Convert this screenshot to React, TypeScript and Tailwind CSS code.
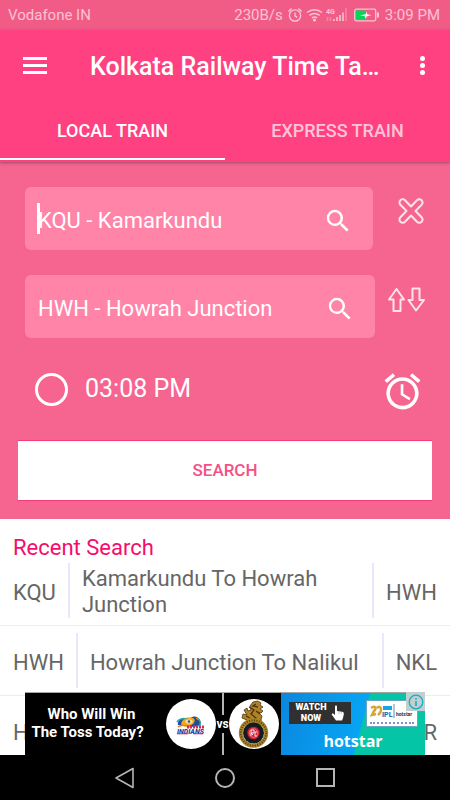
import { type FC, useState } from 'react';
import { MdAlarm, MdSearch } from 'react-icons/md';

interface RecentSearch {
  from: string;
  to: string;
  label: string;
}

const RECENT: RecentSearch[] = [
  { from: 'KQU', to: 'HWH', label: 'Kamarkundu To Howrah Junction' },
  { from: 'HWH', to: 'NKL', label: 'Howrah Junction To Nalikul' },
  { from: 'H', to: 'R', label: '' },
];

const StatusIcons: FC = () => (
  <svg viewBox="0 0 94 20" className="h-5 w-[94px] shrink-0" fill="none" stroke="#fbc3d3" aria-hidden="true">
    {/* alarm */}
    <g strokeWidth="1.4">
      <circle cx="8" cy="10.5" r="5.6" />
      <path d="M8 7.500v3.300l2.200 1.600M1.400 6.600 4.600 3.600M14.600 6.600 11.400 3.600" />
    </g>
    {/* wifi */}
    <g strokeWidth="1.5">
      <path d="M20 7.5q7.500-5.500 15 0M22.400 10.400q5.100-3.800 10.200 0M24.800 13q2.700-1.800 5.400 0" />
      <circle cx="27.500" cy="15" r=".8" fill="#fbc3d3" />
    </g>
    {/* signal */}
    <text x="39" y="8.500" fontSize="7" fontWeight="700" fill="#fbc3d3" stroke="none" fontFamily="Roboto, sans-serif">4G</text>
    <g strokeWidth="1.600">
      <path d="M40.500 16v-4M43.500 16v-4" opacity=".4" />
      <path d="M47 16v-2M50 16v-4M53 16v-6M56 16V7.500" />
      <path d="M59 16V3" opacity=".4" />
    </g>
    {/* battery */}
    <rect x="67.700" y="4.200" width="21" height="11.600" rx="1.500" strokeWidth="1.300" />
    <rect x="69" y="5.500" width="9.500" height="9" fill="#04d65a" stroke="none" />
    <path d="M91 7.500v5" strokeWidth="2" />
    <path d="m73 10.500 6-1.500.500-2.500 1 3 4 .500-5 1.500-.500 2.500-1.500-3z" fill="#fff" stroke="none" />
  </svg>
);

const ClearIcon: FC = () => (
  <svg viewBox="0 0 28 28" className="size-7" fill="none" stroke="#ffe3eb" strokeWidth="2" strokeLinejoin="round" aria-hidden="true">
    <path d="M14 9.500 20 3.200a3 3 0 0 1 4.600 4.600L18.500 14l6.100 6.200a3 3 0 0 1-4.600 4.600L14 18.500 8 24.800a3 3 0 0 1-4.600-4.600L9.500 14 3.400 7.800A3 3 0 0 1 8 3.200z" />
  </svg>
);

const SwapIcon: FC = () => (
  <svg viewBox="0 0 38 28" className="h-7 w-[38px]" fill="none" stroke="#ffe3eb" strokeWidth="2" strokeLinejoin="round" aria-hidden="true">
    <path d="M9.500 4 17 14.500h-3.500V26h-7V14.500H2z" />
    <path d="M25.500 3.500h7V15H37l-8 10.500L21.500 15h4z" />
  </svg>
);

const IndiansLogo: FC = () => (
  <svg viewBox="0 0 50 50" className="size-[50px] shrink-0" aria-hidden="true">
    <circle cx="25" cy="25" r="25" fill="#fff" />
    <path d="M12 26c-1-5 5-8 12-7 6-4 11 0 10 7l-6 2z" fill="#1b4f9c" />
    <path d="M11 23c2-3 6-4 9-3M31 19c4 2 4 6 2 9" fill="none" stroke="#24a6a0" strokeWidth="1.500" />
    <ellipse cx="22" cy="23" rx="7" ry="4" transform="rotate(-18 22 23)" fill="#f5a91d" />
    <ellipse cx="23" cy="22.500" rx="3.500" ry="2" fill="#fbe39a" />
    <circle cx="23" cy="22.500" r="1.200" fill="#1b4f9c" />
    <path d="M12 28c4-3 8-2 12 0M30 19l3 2" fill="none" stroke="#e87b25" strokeWidth="1.500" />
    <path d="M21 28h18" stroke="#d52b55" strokeWidth="3" strokeDasharray="2 1" />
    <text x="11" y="35" fontSize="7" fontWeight="900" fontStyle="italic" fill="#23439b" fontFamily="Roboto, sans-serif">INDIANS</text>
    <path d="M11 34.800h11M27 34.800h10" stroke="#cf2963" strokeWidth="1" />
  </svg>
);

const ChallengersLogo: FC = () => (
  <svg viewBox="0 0 50 50" className="size-[50px] shrink-0" aria-hidden="true">
    <circle cx="25" cy="25" r="25" fill="#fff" />
    <path
      d="m17 25 1-4-5-2 1-4 4 1-3-5 3-2 1 3 3-1-1-4 3-4 5-1 3 2-1 2 3 2-3 2 3 2-2 2-3-1 4 4-1 4 2 5z"
      fill="#b18128"
      stroke="#49350f"
      strokeWidth=".8"
    />
    <path d="m20 8 5 3-3 4 5 4-4 4M27 5l-3 2 5 1M27 12l4 3M17 17l4 2" fill="none" stroke="#49350f" strokeWidth="1.300" />
    <circle cx="24.500" cy="34" r="12.700" fill="none" stroke="#a7842b" strokeWidth="4" />
    <circle cx="24.500" cy="34" r="12.700" fill="none" stroke="#54400f" strokeWidth="2" strokeDasharray="1 1.500" />
    <circle cx="24.500" cy="34" r="10.500" fill="#171a20" />
    <circle cx="24.500" cy="34" r="6.200" fill="#d51c34" />
    <circle cx="24.500" cy="34" r="4.300" fill="none" stroke="#f4b5a8" strokeWidth=".6" />
    <path d="M22 37v-6h3v3h-3l2 2M28 33h-2v4h2" fill="none" stroke="#fff" strokeWidth=".9" />
  </svg>
);

const HandIcon: FC = () => (
  <svg viewBox="0 0 14 16" className="h-4 w-3.5 shrink-0" aria-hidden="true">
    <path d="M4 1.500c0-1.500 2-1.500 2 0V6l5 .800c1.500.200 2 1 1.800 2.500L12 13l-1 2.500H5L1 10c-.8-1.200.7-2 1.600-1.200L4 10z" fill="#fff" />
    <path d="M8 6.500v2.500M10.300 7v2" stroke="#8a8a8a" strokeWidth=".5" />
  </svg>
);

const AdBanner: FC = () => (
  <div className="absolute inset-x-[25px] bottom-0 h-[63px]">
    <a href="#hotstar" className="flex h-full border-t border-[#a5a5a5] bg-black text-white">
      <span className="flex flex-1 flex-col justify-center pr-4 pb-0.5 text-center text-[15px]/[18px] font-bold whitespace-nowrap">
        <span className="pl-2">Who Will Win</span>
        <span>The Toss Today?</span>
      </span>
      <span className="flex items-center">
        <IndiansLogo />
        <span className="flex h-full w-[13px] flex-col items-center">
          <span className="w-0.5 flex-1 bg-[#b5b5b5]" />
          <span className="text-xs/[18px] font-bold">vs</span>
          <span className="w-0.5 flex-1 bg-[#b5b5b5]" />
        </span>
        <ChallengersLogo />
      </span>
      <span className="ml-0.5 flex w-36 flex-col items-center bg-linear-105 from-[#0b87df] via-[#08a4f3] via-55% to-[#04c5a5] to-56% pt-[7px]">
        <span className="flex w-full items-start justify-between pr-[7px] pl-2">
          <span className="mt-0.5 flex h-[22px] w-[62px] items-center justify-center gap-1 bg-[#303030]">
            <span className="flex flex-col text-center text-[9px]/[11px] font-black">
              <span>WATCH</span>
              <span>NOW</span>
            </span>
            <HandIcon />
          </span>
          <span className="flex h-[27px] w-[52px] flex-col items-center justify-between border border-[#68a6c1] bg-white py-0.5">
            <svg viewBox="0 0 48 16" className="h-4 w-12" aria-hidden="true">
              <path d="M3 5c4-3 6 0 3 3l-2 4 4-1M9 5c4-4 6 3 1 7" fill="none" stroke="#d6a62d" strokeWidth="2.500" />
              <path d="M15 3h9v4h-9z" fill="#18a6df" />
              <text x="14" y="14" fontSize="7" fontWeight="900" fill="#1776b8" fontFamily="Roboto, sans-serif">IPL</text>
              <path d="M26 1v14" stroke="#3f6e9c" strokeWidth=".8" />
              <text x="28" y="13" fontSize="5" fontWeight="700" fill="#233247" fontFamily="Roboto, sans-serif">hotstar</text>
            </svg>
            <span className="w-11 border-t-2 border-dotted border-[#8195c4]" />
          </span>
        </span>
        <span className="mt-1 font-['Open_Sans',sans-serif] text-base/[20px] font-bold">hotstar</span>
      </span>
    </a>
    <button type="button" aria-label="Ad information" className="absolute top-0 right-0 flex size-[19px] items-center justify-center bg-[#c3cfcf]">
      <svg viewBox="0 0 16 16" className="size-4" fill="none" stroke="#10aeca" aria-hidden="true">
        <circle cx="8" cy="8" r="6.800" strokeWidth="1.300" />
        <path d="M8 7v5M8 4v1.600" strokeWidth="1.600" />
      </svg>
    </button>
  </div>
);

const App: FC = () => {
  const [tab, setTab] = useState<'local' | 'express'>('local');
  const [from, setFrom] = useState('KQU - Kamarkundu');
  const [to, setTo] = useState('HWH - Howrah Junction');

  const swap = () => {
    setFrom(to);
    setTo(from);
  };

  return (
    <div className="flex h-screen flex-col overflow-hidden bg-white font-[Roboto,sans-serif]">
      <div className="flex h-[30px] shrink-0 items-center justify-between bg-[#f15c87] pr-2.5 pl-2 text-[15px] text-[#fbc3d3]">
        <span>Vodafone IN</span>
        <span className="flex items-center gap-1">
          230B/s
          <StatusIcons />
          3:09 PM
        </span>
      </div>

      <header className="relative z-10 shrink-0 bg-[#ff4081] text-white shadow-[0_1px_3px_rgba(90,60,70,0.6)]">
        <div className="flex h-[72px] items-center pr-4 pb-0.5 pl-[23px]">
          <button type="button" aria-label="Open menu" className="flex w-6 flex-col gap-1">
            <span className="h-[3px] bg-white" />
            <span className="h-[3px] bg-white" />
            <span className="h-[3px] bg-white" />
          </button>
          <h1 className="ml-[43px] flex-1 truncate pt-1 text-[25px] font-medium">Kolkata Railway Time Ta…</h1>
          <button type="button" aria-label="More options" className="flex w-6 flex-col items-center gap-0.5">
            <span className="size-[5px] rounded-full bg-white" />
            <span className="size-[5px] rounded-full bg-white" />
            <span className="size-[5px] rounded-full bg-white" />
          </button>
        </div>
        <div role="tablist" className="flex pb-0.5 text-lg font-medium">
          <button
            type="button"
            role="tab"
            aria-selected={tab === 'local'}
            onClick={() => setTab('local')}
            className={`h-[58px] flex-1 border-b-2 pt-0.5 ${tab === 'local' ? 'border-white' : 'border-transparent text-white/70'}`}
          >
            LOCAL TRAIN
          </button>
          <button
            type="button"
            role="tab"
            aria-selected={tab === 'express'}
            onClick={() => setTab('express')}
            className={`h-[58px] flex-1 border-b-2 pt-0.5 ${tab === 'express' ? 'border-white' : 'border-transparent text-white/70'}`}
          >
            EXPRESS TRAIN
          </button>
        </div>
      </header>

      <form
        onSubmit={(event) => event.preventDefault()}
        className="shrink-0 bg-[#f6658f] px-[18px] pt-[25px] pb-[18px] text-white"
      >
        <div className="flex items-start pl-[7px]">
          <div className="relative flex h-[63px] flex-1 items-center rounded-md bg-[#ff84a8] pt-1 pr-5 pl-[13px]">
            <span className="absolute top-4 left-3 h-[31px] w-[3px] bg-white" />
            <input
              aria-label="From station"
              value={from}
              onChange={(event) => setFrom(event.target.value)}
              className="w-full min-w-0 bg-transparent text-[22px] outline-none"
            />
            <button type="button" aria-label="Find departure station">
              <MdSearch size={30} />
            </button>
          </div>
          <button type="button" aria-label="Clear" onClick={() => setFrom('')} className="mt-2.5 mr-[7px] ml-6">
            <ClearIcon />
          </button>
        </div>

        <div className="mt-[25px] flex items-start pl-[7px]">
          <div className="flex h-[63px] flex-1 items-center rounded-md bg-[#ff84a8] pt-1 pr-5 pl-[13px]">
            <input
              aria-label="To station"
              value={to}
              onChange={(event) => setTo(event.target.value)}
              className="w-full min-w-0 bg-transparent text-[22px] outline-none"
            />
            <button type="button" aria-label="Find arrival station">
              <MdSearch size={30} />
            </button>
          </div>
          <button type="button" aria-label="Swap stations" onClick={swap} className="mt-2.5 mr-[7px] ml-3">
            <SwapIcon />
          </button>
        </div>

        <div className="flex h-[102px] items-center pr-2 pl-[17px]">
          <label className="flex items-center gap-[17px] text-[25px]">
            <input type="radio" name="time" className="size-[33px] appearance-none rounded-full border-3 border-white checked:bg-white" />
            03:08 PM
          </label>
          <button type="button" aria-label="Set time" className="mt-1 ml-auto">
            <MdAlarm size={43} />
          </button>
        </div>

        <button
          type="submit"
          className="h-[61px] w-full border-y border-[#f53c79] bg-white text-[17px] font-medium text-[#f64f86]"
        >
          SEARCH
        </button>
      </form>

      <main className="relative min-h-0 flex-1 overflow-hidden text-[22px] text-[#666]">
        <h2 className="h-9 pt-4 pl-[13px] leading-[26px] text-[#f50c6c]">Recent Search</h2>
        <ul>
          {RECENT.map((item) => (
            <li key={item.from} className="border-b border-[#ededed]">
              <button type="button" className="flex w-full items-center gap-3 px-[13px] py-[7px] text-left">
                <span className="pt-1">{item.from}</span>
                <span className="h-[55px] w-0.5 shrink-0 bg-[#e9e7fb]" />
                <span className="flex-1 pt-1 leading-[26px]">{item.label}</span>
                <span className="h-[55px] w-0.5 shrink-0 bg-[#e9e7fb]" />
                <span className="pt-1">{item.to}</span>
              </button>
            </li>
          ))}
        </ul>
        <AdBanner />
      </main>

      <nav className="flex h-[45px] shrink-0 items-center justify-center bg-black">
        <button type="button" aria-label="Back" className="flex w-[100px] justify-center">
          <svg viewBox="0 0 22 22" className="size-[22px]" fill="none" stroke="#b5b5b5" strokeWidth="1.600" strokeLinejoin="round">
            <path d="M19 1.500v19L2 11z" />
          </svg>
        </button>
        <button type="button" aria-label="Home" className="flex w-[100px] justify-center">
          <span className="size-5 rounded-full border-2 border-[#b5b5b5]" />
        </button>
        <button type="button" aria-label="Recent apps" className="flex w-[100px] justify-center">
          <span className="size-[19px] border-2 border-[#b5b5b5]" />
        </button>
      </nav>
    </div>
  );
};

export default App;
